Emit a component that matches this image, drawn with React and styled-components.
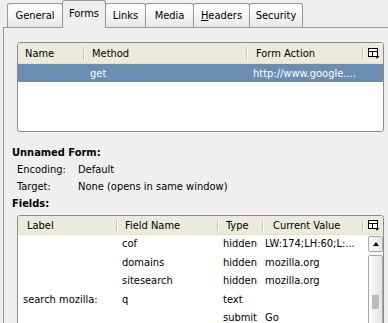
import React from "react";
import styled, { createGlobalStyle } from "styled-components";

const GlobalStyle = createGlobalStyle`
  html, body {
    margin: 0;
    padding: 0;
    background: #efefef;
  }
  body {
    font-family: "DejaVu Sans Condensed", "DejaVu Sans", sans-serif;
    font-stretch: condensed;
    font-size: 11px;
    color: #000;
  }
`;

const Window = styled.div`
  width: 388px;
  height: 323px;
  overflow: hidden;
  background: #efefef;
`;

const TabStrip = styled.div`
  display: flex;
  align-items: flex-end;
  height: 27px;
  padding-left: 7px;
  position: relative;
  z-index: 1;
`;

const Tab = styled.div`
  box-sizing: border-box;
  width: ${(p) => p.$w}px;
  height: ${(p) => (p.$active ? 28 : 24)}px;
  margin-right: -1px;
  margin-bottom: ${(p) => (p.$active ? -1 : 0)}px;
  padding-bottom: ${(p) => (p.$active ? 3 : 0)}px;
  display: flex;
  align-items: center;
  justify-content: center;
  border: 1px solid #919b9c;
  border-bottom: none;
  border-radius: 3px 3px 0 0;
  background: ${(p) =>
    p.$active ? "#efefef" : "linear-gradient(#ffffff, #f3f3f3 60%, #e6e6e6)"};
  position: relative;
  z-index: ${(p) => (p.$active ? 2 : 1)};

  u {
    text-decoration: underline;
  }
`;

const Panel = styled.div`
  margin-left: 3px;
  width: 440px;
  height: 320px;
  border: 1px solid #919b9c;
  border-right: none;
  background: #efefef;
  padding: 14px 0 0 8px;
`;

const ListBox = styled.div`
  box-sizing: border-box;
  width: 367px;
  height: ${(p) => p.$h}px;
  margin-left: 5px;
  border: 1px solid #8b8b8b;
  border-radius: 3px;
  background: #fff;
  overflow: hidden;
  display: flex;
  flex-direction: column;
`;

const Header = styled.div`
  display: flex;
  height: ${(p) => p.$h}px;
  flex: none;
  background: #ebeadb;
  border-bottom: 1px solid #e2dfcf;
`;

const HeadCell = styled.div`
  box-sizing: border-box;
  width: ${(p) => p.$w}px;
  flex: none;
  padding-left: ${(p) => p.$pad}px;
  display: flex;
  align-items: center;
  position: relative;

  &::after {
    content: "";
    position: absolute;
    right: 1px;
    top: 4px;
    bottom: 3px;
    width: 1px;
    background: #c7c4b2;
    box-shadow: 1px 0 0 #ffffff;
  }
`;

const PickerCell = styled.div`
  flex: 1;
  display: flex;
  align-items: center;
  justify-content: center;
  padding-left: 1px;
`;

const Body = styled.div`
  flex: 1;
  display: flex;
  min-height: 0;
`;

const Rows = styled.div`
  flex: 1;
`;

const Row = styled.div`
  box-sizing: border-box;
  display: flex;
  height: ${(p) => p.$h}px;
  padding-bottom: ${(p) => (p.$selected ? 0 : 1)}px;
  align-items: center;
  background: ${(p) => (p.$selected ? "#6a8db4" : "transparent")};
  color: ${(p) => (p.$selected ? "#fff" : "#000")};
`;

const Cell = styled.div`
  box-sizing: border-box;
  width: ${(p) => p.$w}px;
  flex: none;
  padding-left: ${(p) => p.$pad}px;
  white-space: nowrap;
  overflow: hidden;
`;

const ScrollBar = styled.div`
  width: 15px;
  flex: none;
  background: #f7f7f4;
  display: flex;
  flex-direction: column;
  padding-top: 1px;
  box-sizing: border-box;
`;

const ScrollButton = styled.div`
  box-sizing: border-box;
  height: 16px;
  border: 1px solid #a7a7a7;
  border-radius: 2px;
  background: linear-gradient(90deg, #fdfdfd, #e7e7e7);
  display: flex;
  align-items: center;
  justify-content: center;

  &::before {
    content: "";
    border-left: 3.5px solid transparent;
    border-right: 3.5px solid transparent;
    border-bottom: 4px solid #000;
  }
`;

const ScrollThumb = styled.div`
  box-sizing: border-box;
  flex: 1;
  margin-top: 3px;
  border: 1px solid #a7a7a7;
  border-radius: 2px;
  background: linear-gradient(90deg, #fbfbfb, #e4e4e4);
  display: flex;
  justify-content: center;
  padding-top: 39px;
`;

const Grip = styled.div`
  width: 7px;
  height: 14px;
  background-image: radial-gradient(circle, #b9b9b9 0.7px, transparent 0.9px);
  background-size: 2px 2px;
`;

const Info = styled.div`
  margin-top: 12px;
  margin-bottom: 3px;
`;

const Title = styled.div`
  font-weight: bold;
  height: 17px;
  line-height: 17px;
`;

const InfoLine = styled.div`
  display: flex;
  height: 17px;
  line-height: 17px;
  padding-left: 5px;
`;

const InfoLabel = styled.span`
  width: 61px;
  flex: none;
`;

const ColumnPicker = () => (
  <svg width="12" height="11" viewBox="0 0 12 11">
    <rect x="0.5" y="0.5" width="9" height="8" fill="#fff" stroke="#000" />
    <line x1="0" y1="3.5" x2="10" y2="3.5" stroke="#000" />
    <line x1="4.5" y1="3.5" x2="4.5" y2="9" stroke="#000" />
    <polygon points="6.5,8 11.5,8 9,10.5" fill="#000" />
  </svg>
);

const tabs = [
  { label: "General", w: 56 },
  { label: "Forms", w: 44, active: true },
  { label: "Links", w: 41 },
  { label: "Media", w: 49 },
  { label: <><u>H</u>eaders</>, w: 57 },
  { label: "Security", w: 54 },
];

const formCols = [
  { label: "Name", w: 67, hp: 7, dp: 5 },
  { label: "Method", w: 163, hp: 7, dp: 5 },
  { label: "Form Action", w: 116, hp: 8, dp: 5 },
];

const fieldCols = [
  { label: "Label", w: 100, hp: 9, dp: 5 },
  { label: "Field Name", w: 101, hp: 7, dp: 4 },
  { label: "Type", w: 45, hp: 7, dp: 4 },
  { label: "Current Value", w: 100, hp: 9, dp: 1 },
];

const forms = [["", "get", "http://www.google...."]];

const fields = [
  ["", "cof", "hidden", "LW:174;LH:60;L:..."],
  ["", "domains", "hidden", "mozilla.org"],
  ["", "sitesearch", "hidden", "mozilla.org"],
  ["search mozilla:", "q", "text", ""],
  ["", "", "submit", "Go"],
];

const TableHeader = ({ cols, h }) => (
  <Header $h={h}>
    {cols.map((c) => (
      <HeadCell key={c.label} $w={c.w} $pad={c.hp}>
        {c.label}
      </HeadCell>
    ))}
    <PickerCell>
      <ColumnPicker />
    </PickerCell>
  </Header>
);

const App = () => {
  return (
    <Window>
      <GlobalStyle />
      <TabStrip>
        {tabs.map((t, i) => (
          <Tab key={i} $w={t.w} $active={t.active}>
            {t.label}
          </Tab>
        ))}
      </TabStrip>
      <Panel>
        <ListBox $h={90}>
          <TableHeader cols={formCols} h={20} />
          <Body>
            <Rows>
              {forms.map((r, i) => (
                <Row key={i} $h={18} $selected>
                  {formCols.map((c, j) => (
                    <Cell key={j} $w={c.w} $pad={c.dp}>
                      {r[j]}
                    </Cell>
                  ))}
                </Row>
              ))}
            </Rows>
          </Body>
        </ListBox>

        <Info>
          <Title>Unnamed Form:</Title>
          <InfoLine>
            <InfoLabel>Encoding:</InfoLabel>
            <span>Default</span>
          </InfoLine>
          <InfoLine>
            <InfoLabel>Target:</InfoLabel>
            <span>None (opens in same window)</span>
          </InfoLine>
          <Title>Fields:</Title>
        </Info>

        <ListBox $h={130}>
          <TableHeader cols={fieldCols} h={18} />
          <Body>
            <Rows>
              {fields.map((r, i) => (
                <Row key={i} $h={18.5}>
                  {fieldCols.map((c, j) => (
                    <Cell key={j} $w={c.w} $pad={c.dp}>
                      {r[j]}
                    </Cell>
                  ))}
                </Row>
              ))}
            </Rows>
            <ScrollBar>
              <ScrollButton />
              <ScrollThumb>
                <Grip />
              </ScrollThumb>
            </ScrollBar>
          </Body>
        </ListBox>
      </Panel>
    </Window>
  );
};

export default App;
